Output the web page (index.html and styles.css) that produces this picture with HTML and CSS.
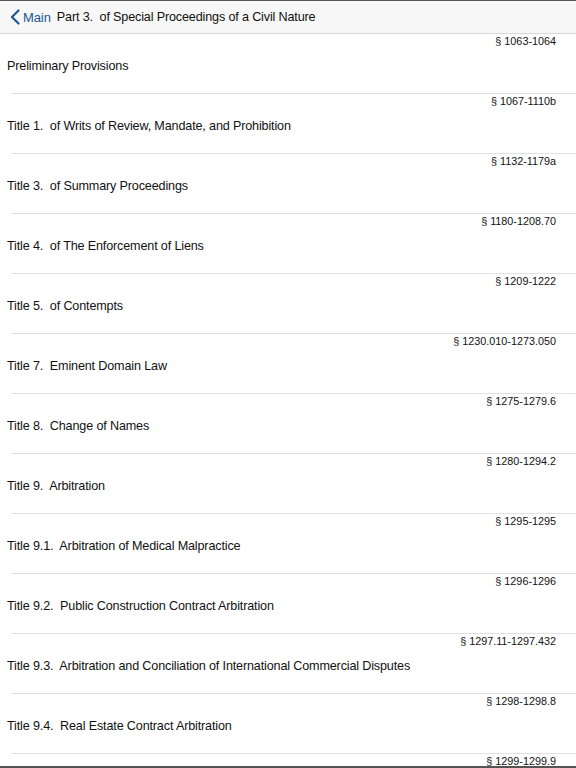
FILE: index.html
```html
<!DOCTYPE html>
<html>
<head>
<meta charset="utf-8">
<link rel="stylesheet" href="styles.css">
</head>
<body>
<div class="screen">
  <header class="nav">
    <a class="back">
      <svg class="chev" width="10" height="16" viewBox="0 0 10 16"><path d="M8.5 1.5 L2 8 L8.5 14.5" fill="none" stroke="#1d5796" stroke-width="2.2" stroke-linecap="round" stroke-linejoin="round"/></svg>
      <span class="back-label">Main</span>
    </a>
    <span class="nav-title">Part 3.  of Special Proceedings of a Civil Nature</span>
  </header>
  <main class="list">
    <div class="row"><div class="sec">§ 1063-1064</div><div class="title">Preliminary Provisions</div><div class="sep"></div></div>
    <div class="row"><div class="sec">§ 1067-1110b</div><div class="title">Title 1.  of Writs of Review, Mandate, and Prohibition</div><div class="sep"></div></div>
    <div class="row"><div class="sec">§ 1132-1179a</div><div class="title">Title 3.  of Summary Proceedings</div><div class="sep"></div></div>
    <div class="row"><div class="sec">§ 1180-1208.70</div><div class="title">Title 4.  of The Enforcement of Liens</div><div class="sep"></div></div>
    <div class="row"><div class="sec">§ 1209-1222</div><div class="title">Title 5.  of Contempts</div><div class="sep"></div></div>
    <div class="row"><div class="sec">§ 1230.010-1273.050</div><div class="title">Title 7.  Eminent Domain Law</div><div class="sep"></div></div>
    <div class="row"><div class="sec">§ 1275-1279.6</div><div class="title">Title 8.  Change of Names</div><div class="sep"></div></div>
    <div class="row"><div class="sec">§ 1280-1294.2</div><div class="title">Title 9.  Arbitration</div><div class="sep"></div></div>
    <div class="row"><div class="sec">§ 1295-1295</div><div class="title">Title 9.1.  Arbitration of Medical Malpractice</div><div class="sep"></div></div>
    <div class="row"><div class="sec">§ 1296-1296</div><div class="title">Title 9.2.  Public Construction Contract Arbitration</div><div class="sep"></div></div>
    <div class="row"><div class="sec">§ 1297.11-1297.432</div><div class="title">Title 9.3.  Arbitration and Conciliation of International Commercial Disputes</div><div class="sep"></div></div>
    <div class="row"><div class="sec">§ 1298-1298.8</div><div class="title">Title 9.4.  Real Estate Contract Arbitration</div><div class="sep"></div></div>
    <div class="row"><div class="sec">§ 1299-1299.9</div></div>
  </main>
</div>
</body>
</html>
```
FILE: styles.css
```css
html, body {
  margin: 0;
  padding: 0;
  background: #fff;
}
body {
  font-family: "Liberation Sans", Arial, sans-serif;
  color: #111;
}
.screen {
  width: 576px;
  height: 768px;
  box-sizing: border-box;
  overflow: hidden;
  border-top: 1px solid #555;
  border-bottom: 2px solid #555;
  display: flex;
  flex-direction: column;
}
.nav {
  flex: 0 0 auto;
  background: #f7f7f7;
  border-bottom: 1px solid #d9d9d9;
  display: flex;
  align-items: center;
  padding-left: 10px;
  box-sizing: border-box;
  height: 33px;
}
.back {
  display: flex;
  align-items: center;
  color: #1d5796;
}
.chev {
  display: block;
  margin-right: 3px;
}
.back-label {
  font-size: 13px;
  letter-spacing: -0.1px;
}
.nav-title {
  margin-left: 6px;
  font-size: 12.6px;
  letter-spacing: -0.15px;
  color: #111;
  white-space: pre;
}
.list {
  flex: 1 1 auto;
  overflow: hidden;
}
.row {
  height: 60px;
  display: flex;
  flex-direction: column;
}
.sec {
  font-size: 10.8px;
  text-align: right;
  padding-right: 20px;
  height: 15px;
  line-height: 14px;
  color: #111;
}
.title {
  font-size: 12.6px;
  letter-spacing: -0.15px;
  line-height: 16px;
  padding-left: 7px;
  margin-top: 9px;
  flex: 1 1 auto;
  white-space: pre;
}
.sep {
  height: 1px;
  background: #e2e2e2;
  margin-left: 11px;
}
```
